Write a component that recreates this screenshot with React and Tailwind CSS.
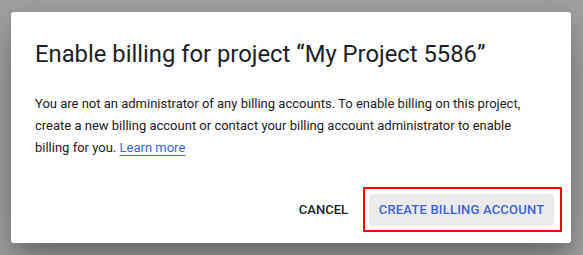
export default function App() {
  return (
    <div className="w-[583px] h-[255px] bg-[#a2a2a2] pl-[11px] pt-[12px] overflow-hidden" style={{ fontFamily: "Roboto, 'Liberation Sans', sans-serif" }}>
      <div className="w-[560px] h-[231px] bg-white rounded-[3px] shadow-[0_11px_15px_-7px_rgba(0,0,0,0.2),0_24px_38px_3px_rgba(0,0,0,0.14),0_9px_46px_8px_rgba(0,0,0,0.12)] flex flex-col pl-[24px] pr-[17px] pt-[27px]">
        <h1 className="text-[23.8px] leading-[30px] text-[#202124] font-normal whitespace-nowrap">
          Enable billing for project “My Project 5586”
        </h1>
        <p className="w-[492px] mt-[24px] text-[13px] leading-[22px] text-[#202124]">
          You are not an administrator of any billing accounts. To enable billing on this project, create a new billing account or contact your billing account administrator to enable billing for you.{" "}
          <a href="#" className="text-[#3d63d8] underline underline-offset-[3px]">Learn more</a>
        </p>
        <div className="mt-auto mb-[17px] flex items-center justify-end gap-[21px]">
          <button className="text-[13px] font-medium text-[#202124] uppercase">Cancel</button>
          <span className="relative flex">
            <button className="h-[32px] w-[185px] rounded-[4px] bg-[#ebebeb] text-[13px] font-medium text-[#3d63d8] uppercase tracking-[0.2px]">
              Create billing account
            </button>
            <span className="absolute -left-[6px] -right-[8px] -top-[7px] -bottom-[6px] border-2 border-[#ff0000]"></span>
          </span>
        </div>
      </div>
    </div>
  );
}
